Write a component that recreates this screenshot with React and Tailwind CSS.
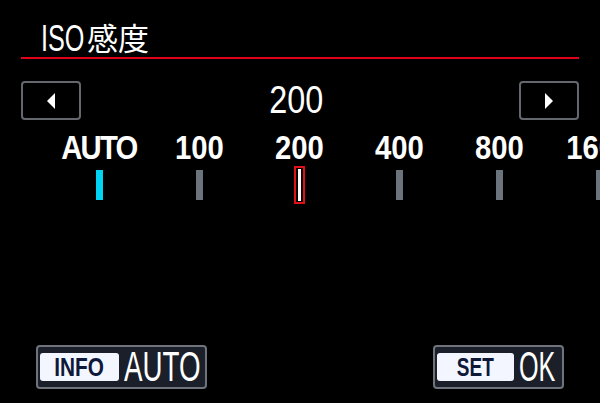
const font = {
  fontFamily: '"Liberation Sans", "Noto Sans CJK JP", sans-serif',
};

const stops = [
  { label: "AUTO", tick: "auto" },
  { label: "100", tick: "plain" },
  { label: "200", tick: "selected" },
  { label: "400", tick: "plain" },
  { label: "800", tick: "plain" },
  { label: "1600", tick: "plain" },
];

function Tick({ kind }) {
  if (kind === "selected") {
    return (
      <div className="mt-[2px] flex h-[38px] w-[11px] items-center justify-center border-2 border-[#e0101a] bg-black">
        <div className="h-[32px] w-[3px] bg-white" />
      </div>
    );
  }
  return (
    <div
      className={`mt-[6px] h-[30px] w-[7px] ${
        kind === "auto" ? "bg-[#00d4f5]" : "bg-[#6b737c]"
      }`}
    />
  );
}

function ArrowButton({ dir }) {
  return (
    <div className="flex h-[39px] w-[60px] items-center justify-center rounded-[4px] border-2 border-[#64686e]">
      <svg width="10" height="16" viewBox="0 0 10 16">
        {dir === "left" ? (
          <polygon points="9,0 9,16 1,8" fill="#fff" />
        ) : (
          <polygon points="1,0 1,16 9,8" fill="#fff" />
        )}
      </svg>
    </div>
  );
}

function KeyButton({ keyLabel, keyScale, text, textScale, pillW, className }) {
  return (
    <div
      className={`flex h-[44px] items-center rounded-[4px] border-2 border-[#6f747c] bg-[#1b1f2a] pl-[2px] ${className}`}
    >
      <div
        className={`flex h-[28px] shrink-0 items-center justify-center rounded-[3px] bg-[#f3f6ff] text-[26px] font-bold leading-none text-[#0e1838] ${pillW}`}
      >
        <span className={`inline-block whitespace-nowrap ${keyScale}`}>{keyLabel}</span>
      </div>
      <span
        className={`ml-[5px] inline-block origin-left whitespace-nowrap text-[42px] leading-none text-white ${textScale}`}
      >
        {text}
      </span>
    </div>
  );
}

export default function App() {
  return (
    <div className="relative flex h-[403px] w-[600px] flex-col overflow-hidden bg-black text-white" style={font}>
      {/* Header */}
      <div className="flex items-start pl-[41px] pt-[21px] leading-none">
        <div className="w-[46px] text-[36px]">
          <span className="inline-block origin-left scale-x-[0.7] whitespace-nowrap">ISO</span>
        </div>
        <span className="text-[31px]" style={{ fontFamily: '"Noto Sans CJK JP", sans-serif' }}>
          感度
        </span>
      </div>
      <div className="mx-[21px] h-[2px] bg-[#e3001b]" />

      {/* Value row */}
      <div className="mt-[21px] flex items-center justify-between px-[21px]">
        <ArrowButton dir="left" />
        <span className="mb-[2px] inline-block scale-x-[0.83] pr-[8px] text-[39px] leading-none">200</span>
        <ArrowButton dir="right" />
      </div>

      {/* Scale */}
      <div className="mt-[9px] flex pl-[49px]">
        {stops.map((s) => (
          <div key={s.label} className="flex w-[100px] shrink-0 flex-col items-center">
            <span
              className={`inline-block scale-x-[0.86] whitespace-nowrap text-[34px] font-bold leading-none ${
                s.label === "AUTO" ? "tracking-[-2px]" : ""
              }`}
            >
              {s.label}
            </span>
            <Tick kind={s.tick} />
          </div>
        ))}
      </div>

      {/* Bottom keys */}
      <div className="mt-auto mb-[14px] flex justify-between px-[36px]">
        <KeyButton
          keyLabel="INFO"
          keyScale="scale-x-[0.8]"
          text="AUTO"
          textScale="scale-x-[0.66]"
          pillW="w-[79px]"
          className="w-[171px]"
        />
        <KeyButton
          keyLabel="SET"
          keyScale="scale-x-[0.73]"
          text="OK"
          textScale="scale-x-[0.6]"
          pillW="w-[77px]"
          className="w-[131px]"
        />
      </div>
    </div>
  );
}
